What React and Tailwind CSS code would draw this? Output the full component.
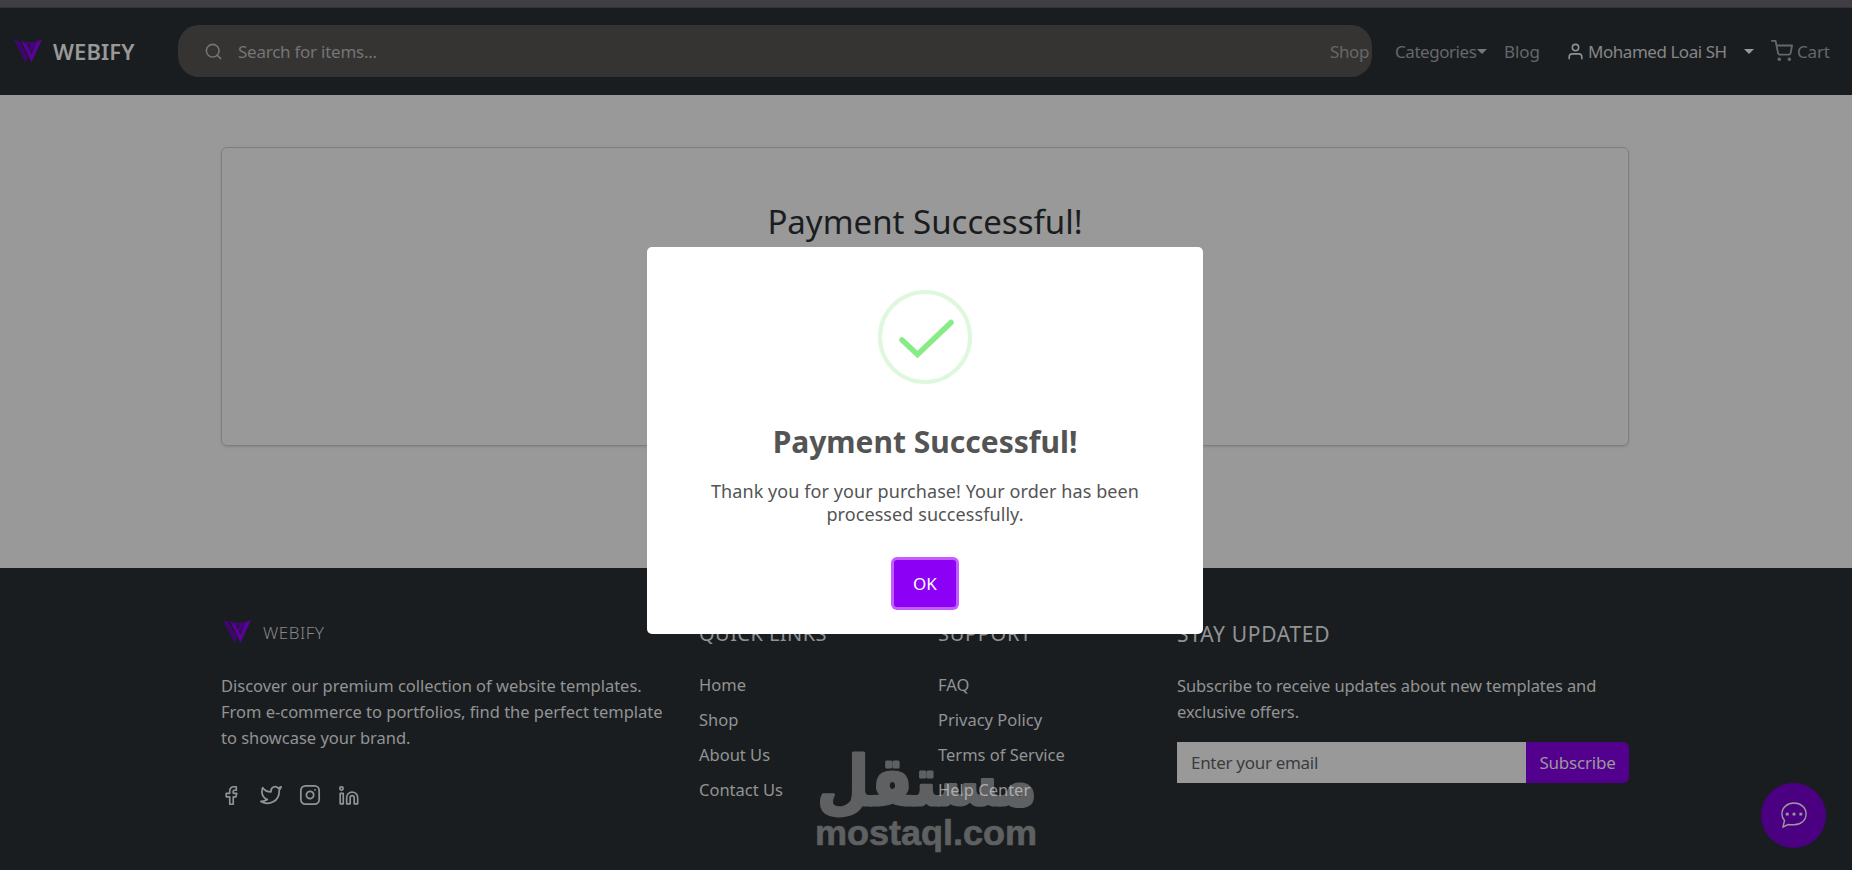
// src/App.jsx
import { FiSearch, FiUser, FiShoppingCart, FiTwitter } from "react-icons/fi";
import { Instagram } from "lucide-react";

const quickLinks = ["Home", "Shop", "About Us", "Contact Us"];
const supportLinks = ["FAQ", "Privacy Policy", "Terms of Service", "Help Center"];

function Logo({ className }) {
  return (
    <svg viewBox="0 0 28 23" className={className} fill="none">
      <path d="M0 0L5.500 2.200L13.500 17.500L11.500 22.800Z" fill="#4a0085" />
      <path d="M7 1L17.500 22.800L28 0L22.500 2L17.500 14.500L12.800 5Z" fill="#5c009c" />
      <path d="M9 1.500L14 3L20 2.500L22 3.500L17 12L15 8L17 5L13 5.500Z" fill="#4a0085" />
      <path d="M3.500 3.500L12 20" stroke="#1a1d1f" strokeWidth="0.600" />
    </svg>
  );
}

function Header() {
  return (
    <header className="h-[87px] pb-px bg-[#1a1d1f] flex items-center text-[17px] text-[#66676a]">
      <Logo className="w-[28px] h-[24px] ml-[14px] shrink-0" />
      <span className="ml-[11px] w-[125px] text-[22px] font-semibold text-[#999] tracking-[0.1px]">WEBIFY</span>
      <div className="w-[1194px] h-[52px] rounded-[21px] bg-[#363432] flex items-center shrink-0">
        <FiSearch className="ml-[26px] size-[19px] text-[#747474]" />
        <span className="ml-[15px] pt-px text-[#747578] tracking-[-0.25px]">Search for items...</span>
        <span className="ml-auto mr-[3px] pt-px tracking-[-0.4px]">Shop</span>
      </div>
      <span className="ml-[23px] w-[82px] pt-[2px] tracking-[-0.45px]">Categories</span>
      <span className="border-x-[5px] border-x-transparent border-t-[5px] border-t-[#77787a]" />
      <span className="ml-[17px] w-[36px] pt-[2px] tracking-[-0.1px]">Blog</span>
      <FiUser className="ml-[26px] size-[19px] text-[#8f9091]" />
      <span className="ml-[3px] w-[139px] pt-[2px] text-[#858688] tracking-[-0.46px]">Mohamed Loai SH</span>
      <span className="ml-[17px] border-x-[5px] border-x-transparent border-t-[5px] border-t-[#999]" />
      <FiShoppingCart className="ml-[17px] size-[22px]" strokeWidth={2} />
      <span className="ml-[4px] pt-[2px] tracking-[-0.2px]">Cart</span>
    </header>
  );
}

function LinkColumn({ title, links, spacing }) {
  return (
    <div className="w-[239px]">
      <h5 className={`pt-px text-[20px] leading-[24px] ${spacing}`}>{title}</h5>
      <ul className="mt-[26px] space-y-[9px]">
        {links.map((l) => (
          <li key={l} className="text-[16.5px] leading-[26px]">{l}</li>
        ))}
      </ul>
    </div>
  );
}

function Footer() {
  return (
    <footer className="relative h-[302px] bg-[#1a1d1f] text-[#929394]">
      <div className="flex pl-[221px] pt-[53px]">
        <div className="w-[478px]">
          <div className="flex items-center h-[24px] text-[#858688]">
            <Logo className="w-[28px] h-[23px] ml-[2px] mb-[3px]" />
            <span className="ml-[12px] text-[17px] font-light tracking-[0.5px]">WEBIFY</span>
          </div>
          <p className="mt-[28px] text-[16.5px] leading-[26px] whitespace-nowrap tracking-[-0.02px]">
            Discover our premium collection of website templates.
            <br />
            From e-commerce to portfolios, find the perfect template
            <br />
            to showcase your brand.
          </p>
          <div className="mt-[33px] flex items-center">
            <FacebookIcon />
            <FiTwitter className="ml-[18px] size-[22px]" strokeWidth={1.9} />
            <Instagram className="ml-[17px] size-[22px]" strokeWidth={1.9} />
            <LinkedinIcon />
          </div>
        </div>
        <LinkColumn title="QUICK LINKS" links={quickLinks} spacing="tracking-[0.45px]" />
        <LinkColumn title="SUPPORT" links={supportLinks} spacing="tracking-[0.7px]" />
        <div className="w-[452px]">
          <h5 className="pt-px text-[21px] leading-[24px] tracking-[0.7px]">STAY UPDATED</h5>
          <p className="mt-[27px] text-[16.5px] leading-[26px] whitespace-nowrap tracking-[-0.1px]">
            Subscribe to receive updates about new templates and
            <br />
            exclusive offers.
          </p>
          <div className="mt-[17px] h-[41px] flex text-[17px]">
            <div className="w-[349px] bg-[#999] text-[#393c3f] flex items-center pl-[14px] tracking-[-0.3px]">Enter your email</div>
            <div className="flex-1 bg-[#54008f] text-[#999] flex items-center justify-center rounded-r-[6px] tracking-[-0.2px]">Subscribe</div>
          </div>
        </div>
      </div>
      <Watermark />
      <button className="absolute left-[1761px] top-[215px] size-[65px] rounded-full bg-[#4b0082] flex items-center justify-center">
        <ChatIcon />
      </button>
    </footer>
  );
}

function ChatIcon() {
  return (
    <svg viewBox="0 0 26 26" className="size-[26px] -mt-[2px]" fill="none" stroke="#9a9a9a" strokeWidth="1.400">
      <path d="M3.500 18.500C1.800 16.500 0.900 14.300 0.900 12C0.900 5.700 6.300 1 13 1S25.100 5.700 25.100 12S19.700 22.800 13 22.800C11 22.800 9 22.900 7.300 22.500L2 25Z" />
      <path d="M4.800 10.700h2.800v2.800h-2.800zM11.600 10.700h2.800v2.800h-2.800zM18.400 10.700h2.800v2.800h-2.800z" fill="#9a9a9a" stroke="none" />
    </svg>
  );
}

function FacebookIcon() {
  return (
    <svg viewBox="0 0 24 24" className="size-[21px]" fill="none" stroke="currentColor" strokeWidth="1.900" strokeLinejoin="round">
      <path d="M17.500 2H14.500a4.500 4.500 0 0 0-4.500 4.500V9.500H6V13.500H10V22H14V13.500H17L18 9.500H14V7a1 1 0 0 1 1-1h2.500Z" />
    </svg>
  );
}

function LinkedinIcon() {
  return (
    <svg viewBox="0 0 24 24" className="ml-[17px] size-[21px]" fill="none" stroke="currentColor" strokeWidth="1.900" strokeLinejoin="round">
      <circle cx="4" cy="4" r="1.900" />
      <path d="M2.500 9.500h3.500v12H2.500zM16 8a6.500 6.500 0 0 1 6.500 6.500v7h-4v-7a2.300 2.300 0 0 0-4.600 0v7h-4v-7A6.200 6.200 0 0 1 16 8Z" />
    </svg>
  );
}

function Watermark() {
  return (
    <div className="absolute left-[815px] top-[180px] opacity-35">
      <svg width="222" height="110" className="block overflow-visible" fill="#dedede" stroke="#dedede" strokeLinejoin="round">
        <text x="2" y="57" fontSize="68" fontWeight="700" strokeWidth="3" fontFamily='"DejaVu Sans", sans-serif' textLength="220" lengthAdjust="spacingAndGlyphs">
          مستقل
        </text>
        <text x="0" y="97" fontSize="35" fontWeight="700" strokeWidth="0.600" fontFamily='"Liberation Sans", sans-serif' textLength="222" lengthAdjust="spacingAndGlyphs">
          mostaql.com
        </text>
      </svg>
    </div>
  );
}

function SuccessModal() {
  return (
    <div className="absolute inset-0 flex items-start justify-center">
      <div className="mt-[247px] -ml-[2px] w-[556px] h-[387px] rounded-[5px] bg-white text-[#545454] flex flex-col items-center">
        <svg viewBox="0 0 94 94" className="mt-[43px] size-[94px]" fill="none">
          <circle cx="47" cy="47" r="45" stroke="#ddf8dc" strokeWidth="4" />
          <path d="M24 50L39.500 64.500L73 32.500" stroke="#87ec87" strokeWidth="5.500" strokeLinecap="round" />
        </svg>
        <h2 className="mt-[36px] text-[30px] leading-[44px] font-bold">Payment Successful!</h2>
        <p className="mt-[16px] text-center text-[18px] leading-[23px] whitespace-nowrap tracking-[0.08px]">
          Thank you for your purchase! Your order has been
          <br />
          processed successfully.
        </p>
        <button className="mt-[34px] w-[62px] h-[47px] rounded-[3px] bg-[#8c00f5] text-[17px] text-white ring-3 ring-[#c45cff]">OK</button>
      </div>
    </div>
  );
}

export default function App() {
  return (
    <div className="relative w-[1852px] h-[870px] overflow-hidden bg-[#999] font-['Noto_Sans',sans-serif] whitespace-nowrap">
      <div className="h-[8px] bg-[#403d44] border-b border-[#343337]" />
      <Header />
      <main className="h-[473px] pt-[52px] pl-[221px]">
        <section className="w-[1408px] h-[299px] rounded-[6px] border border-[#7f7f7f] shadow-sm pt-[50px] flex justify-center">
          <h1 className="text-[33px] leading-[48px] text-[#1a1d1f]">Payment Successful!</h1>
        </section>
      </main>
      <Footer />
      <SuccessModal />
    </div>
  );
}
